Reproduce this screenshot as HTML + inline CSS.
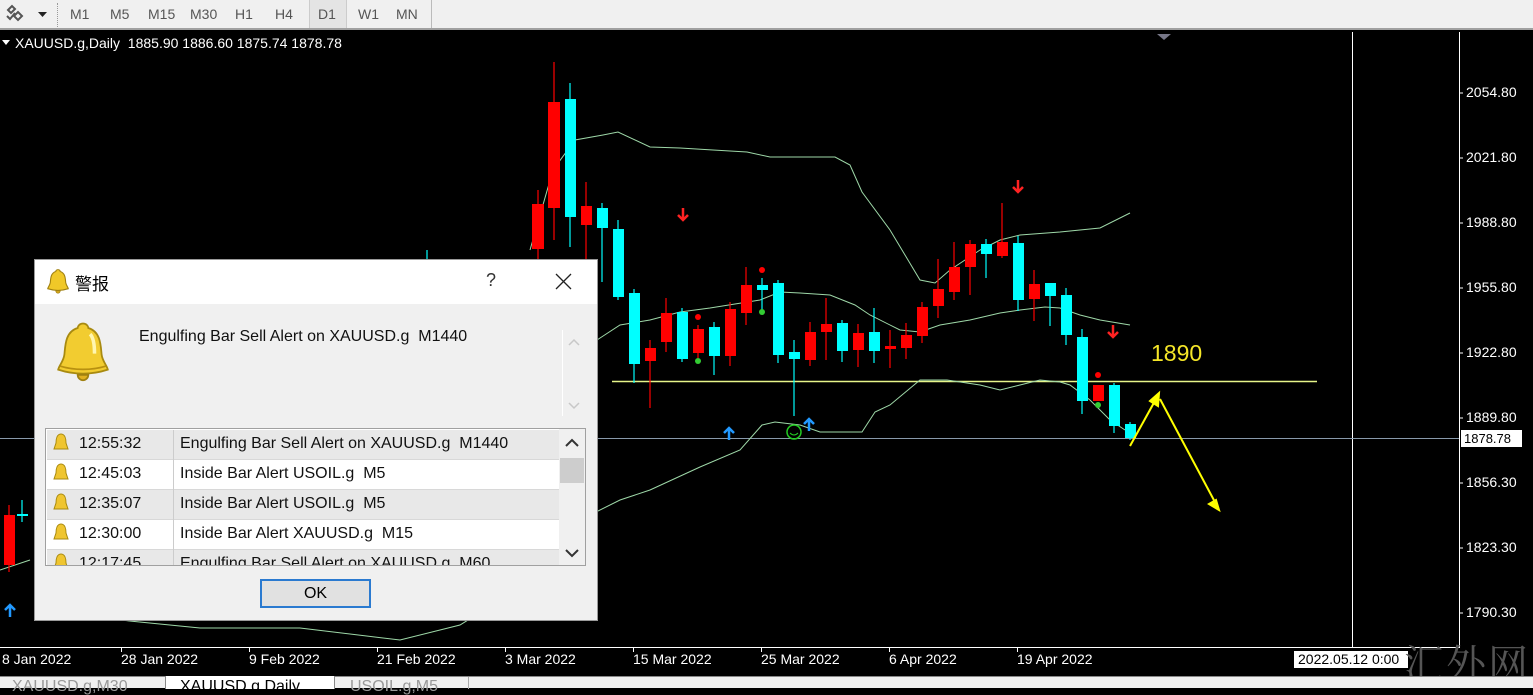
<!DOCTYPE html>
<html><head><meta charset="utf-8"><style>
*{margin:0;padding:0;box-sizing:border-box}
body{width:1533px;height:688px;overflow:hidden;background:#000;font-family:"Liberation Sans","Noto Sans CJK SC",sans-serif;position:relative}
.tb{position:absolute;left:0;top:0;width:1533px;height:30px;background:#f0f0f0;border-bottom:2px solid #a0a0a0}
.tb span{position:absolute;top:6px;font-size:14px;color:#555}
.tabs{position:absolute;left:0;top:676px;width:1533px;height:12px;background:#f0f0f0;border-top:1px solid #888}
.tabs span{position:absolute;top:2px;font-size:16px;color:#999;line-height:16px}
.ax{position:absolute;left:1466px;font-size:14px;color:#fff}
.tl{position:absolute;top:651px;font-size:14px;color:#fff}
.dlg{position:absolute;left:34px;top:259px;width:564px;height:362px;background:#f0f0f0;border:1px solid #9a9a9a}
.ttl{position:absolute;left:0;top:0;width:562px;height:44px;background:#fff}
.row{position:absolute;left:1px;width:512px;height:30px;font-size:16px;color:#111;border-bottom:1px solid #d8d8d8}
.row .t{position:absolute;left:32px;top:5px}
.row .m{position:absolute;left:133px;top:5px}
.row .sep{position:absolute;left:126px;top:0;width:1px;height:30px;background:#ccc}
</style></head><body>
<div class="tb">
<svg style="position:absolute;left:4px;top:4px" width="48" height="22"><path d="M4 6l4-4 3 3-4 4zM10 12l4-4 4 4-4 4zM3 12l3 3 5-6" stroke="#555" stroke-width="2" fill="none"/><path d="M34 8h9l-4.5 5z" fill="#222"/></svg>
<div style="position:absolute;left:57px;top:3px;width:2px;height:24px;border-left:1px dotted #999"></div>
<span style="left:70px">M1</span><span style="left:110px">M5</span><span style="left:148px">M15</span><span style="left:190px">M30</span><span style="left:235px">H1</span><span style="left:275px">H4</span>
<div style="position:absolute;left:309px;top:0;width:38px;height:28px;background:#e4e4e4;border-left:1px solid #ccc;border-right:1px solid #ccc"></div>
<span style="left:318px">D1</span><span style="left:358px">W1</span><span style="left:396px">MN</span>
<div style="position:absolute;left:431px;top:0;width:1px;height:28px;background:#bbb"></div>
</div>

<svg style="position:absolute;left:0;top:30px" width="1533" height="646" viewBox="0 30 1533 646">
<line x1="0" y1="647.5" x2="1459" y2="647.5" stroke="#fff"/>
<line x1="1459.5" y1="32" x2="1459.5" y2="648" stroke="#fff"/>
<line x1="1352.5" y1="32" x2="1352.5" y2="648" stroke="#fff"/>
<path d="M1157 34h14l-7 6z" fill="#778"/>
<g stroke="#fff"><line x1="121.5" y1="647" x2="121.5" y2="652"/><line x1="249.5" y1="647" x2="249.5" y2="652"/><line x1="377.5" y1="647" x2="377.5" y2="652"/><line x1="505.5" y1="647" x2="505.5" y2="652"/><line x1="633.5" y1="647" x2="633.5" y2="652"/><line x1="761.5" y1="647" x2="761.5" y2="652"/><line x1="889.5" y1="647" x2="889.5" y2="652"/><line x1="1017.5" y1="647" x2="1017.5" y2="652"/>
<line x1="1459" y1="93" x2="1463" y2="93"/><line x1="1459" y1="158" x2="1463" y2="158"/><line x1="1459" y1="223" x2="1463" y2="223"/><line x1="1459" y1="288" x2="1463" y2="288"/><line x1="1459" y1="353" x2="1463" y2="353"/><line x1="1459" y1="418" x2="1463" y2="418"/><line x1="1459" y1="483" x2="1463" y2="483"/><line x1="1459" y1="548" x2="1463" y2="548"/><line x1="1459" y1="613" x2="1463" y2="613"/></g>
<line x1="0" y1="438.5" x2="1459" y2="438.5" stroke="#8899aa"/>
<line x1="612" y1="381.5" x2="1317" y2="381.5" stroke="#e6f58a" stroke-width="1.5"/>
<g fill="none" stroke="#9ed8a8" stroke-width="1">
<polyline points="530,250 553,170 575,140 603,135 618,132 650,147 680,148 713,150 747,152 770,157 835,157 850,165 862,192 890,230 920,280 935,283 950,270 980,250 1000,240 1020,235 1060,232 1100,228 1130,213"/>
<polyline points="560,360 597,340 620,325 650,320 680,312 710,308 760,300 780,292 800,293 830,295 855,305 870,315 900,330 920,332 940,325 970,320 1000,313 1020,310 1045,307 1060,308 1080,315 1100,320 1130,325"/>
<polyline points="120,620 200,628 300,628 400,640 460,625 500,600 540,560 580,520 620,500 650,490 700,467 740,450 762,425 775,422 800,425 820,432 862,432 875,412 890,405 920,380 947,380 980,385 1000,390 1020,385 1040,380 1060,382 1070,385 1090,400 1110,420 1125,430"/>
<polyline points="0,570 30,560"/>
</g>
<g stroke-width="1.2">
<line x1="9" y1="505" x2="9" y2="572" stroke="#f00"/><rect x="4" y="515" width="11" height="50" fill="#f00"/>
<line x1="22" y1="500" x2="22" y2="522" stroke="#0ff"/><rect x="17" y="514" width="11" height="2" fill="#0ff"/>
<line x1="427" y1="250" x2="427" y2="262" stroke="#0ff"/>
<line x1="538" y1="190" x2="538" y2="262" stroke="#f00"/><rect x="532" y="204" width="12" height="45" fill="#f00"/>
<line x1="554" y1="62" x2="554" y2="240" stroke="#f00"/><rect x="548" y="102" width="12" height="106" fill="#f00"/>
<line x1="570" y1="83" x2="570" y2="247" stroke="#0ff"/><rect x="565" y="99" width="11" height="118" fill="#0ff"/>
<line x1="586" y1="182" x2="586" y2="262" stroke="#f00"/><rect x="581" y="206" width="11" height="19" fill="#f00"/>
<line x1="602" y1="203" x2="602" y2="282" stroke="#0ff"/><rect x="597" y="208" width="11" height="20" fill="#0ff"/>
<line x1="618" y1="220" x2="618" y2="300" stroke="#0ff"/><rect x="613" y="229" width="11" height="68" fill="#0ff"/>
<line x1="634" y1="289" x2="634" y2="383" stroke="#0ff"/><rect x="629" y="293" width="11" height="71" fill="#0ff"/>
<line x1="650" y1="340" x2="650" y2="408" stroke="#f00"/><rect x="645" y="348" width="11" height="13" fill="#f00"/>
<line x1="666" y1="298" x2="666" y2="352" stroke="#f00"/><rect x="661" y="313" width="11" height="29" fill="#f00"/>
<line x1="682" y1="308" x2="682" y2="362" stroke="#0ff"/><rect x="677" y="312" width="11" height="47" fill="#0ff"/>
<line x1="698" y1="325" x2="698" y2="358" stroke="#f00"/><rect x="693" y="329" width="11" height="24" fill="#f00"/>
<line x1="714" y1="322" x2="714" y2="375" stroke="#0ff"/><rect x="709" y="327" width="11" height="29" fill="#0ff"/>
<line x1="730" y1="302" x2="730" y2="366" stroke="#f00"/><rect x="725" y="309" width="11" height="47" fill="#f00"/>
<line x1="746" y1="267" x2="746" y2="325" stroke="#f00"/><rect x="741" y="285" width="11" height="28" fill="#f00"/>
<line x1="762" y1="278" x2="762" y2="310" stroke="#0ff"/><rect x="757" y="285" width="11" height="5" fill="#0ff"/>
<line x1="778" y1="280" x2="778" y2="363" stroke="#0ff"/><rect x="773" y="283" width="11" height="72" fill="#0ff"/>
<line x1="794" y1="340" x2="794" y2="416" stroke="#0ff"/><rect x="789" y="352" width="11" height="7" fill="#0ff"/>
<line x1="810" y1="322" x2="810" y2="366" stroke="#f00"/><rect x="805" y="332" width="11" height="28" fill="#f00"/>
<line x1="826" y1="298" x2="826" y2="360" stroke="#f00"/><rect x="821" y="324" width="11" height="8" fill="#f00"/>
<line x1="842" y1="320" x2="842" y2="362" stroke="#0ff"/><rect x="837" y="323" width="11" height="28" fill="#0ff"/>
<line x1="858" y1="324" x2="858" y2="367" stroke="#f00"/><rect x="853" y="333" width="11" height="17" fill="#f00"/>
<line x1="874" y1="308" x2="874" y2="363" stroke="#0ff"/><rect x="869" y="332" width="11" height="19" fill="#0ff"/>
<line x1="890" y1="330" x2="890" y2="368" stroke="#f00"/><rect x="885" y="346" width="11" height="3" fill="#f00"/>
<line x1="906" y1="323" x2="906" y2="359" stroke="#f00"/><rect x="901" y="335" width="11" height="13" fill="#f00"/>
<line x1="922" y1="302" x2="922" y2="343" stroke="#f00"/><rect x="917" y="307" width="11" height="29" fill="#f00"/>
<line x1="938" y1="259" x2="938" y2="318" stroke="#f00"/><rect x="933" y="289" width="11" height="17" fill="#f00"/>
<line x1="954" y1="242" x2="954" y2="300" stroke="#f00"/><rect x="949" y="267" width="11" height="25" fill="#f00"/>
<line x1="970" y1="240" x2="970" y2="295" stroke="#f00"/><rect x="965" y="244" width="11" height="23" fill="#f00"/>
<line x1="986" y1="239" x2="986" y2="278" stroke="#0ff"/><rect x="981" y="244" width="11" height="10" fill="#0ff"/>
<line x1="1002" y1="203" x2="1002" y2="258" stroke="#f00"/><rect x="997" y="242" width="11" height="14" fill="#f00"/>
<line x1="1018" y1="236" x2="1018" y2="311" stroke="#0ff"/><rect x="1013" y="243" width="11" height="57" fill="#0ff"/>
<line x1="1034" y1="270" x2="1034" y2="321" stroke="#f00"/><rect x="1029" y="284" width="11" height="15" fill="#f00"/>
<line x1="1050" y1="283" x2="1050" y2="326" stroke="#0ff"/><rect x="1045" y="283" width="11" height="13" fill="#0ff"/>
<line x1="1066" y1="288" x2="1066" y2="345" stroke="#0ff"/><rect x="1061" y="295" width="11" height="40" fill="#0ff"/>
<line x1="1082" y1="329" x2="1082" y2="414" stroke="#0ff"/><rect x="1077" y="337" width="11" height="64" fill="#0ff"/>
<rect x="1093" y="385" width="11" height="16" fill="#f00"/>
<line x1="1114" y1="383" x2="1114" y2="433" stroke="#0ff"/><rect x="1109" y="385" width="11" height="41" fill="#0ff"/>
<line x1="1130" y1="422" x2="1130" y2="440" stroke="#0ff"/><rect x="1125" y="424" width="11" height="14" fill="#0ff"/>
</g>
<g fill="#f00"><circle cx="762" cy="270" r="3"/><circle cx="698" cy="317" r="3"/><circle cx="1098" cy="375" r="3"/></g>
<g fill="#3c3"><circle cx="698" cy="361" r="3"/><circle cx="762" cy="312" r="3"/><circle cx="1098" cy="405" r="3"/></g>
<g stroke="#f22" stroke-width="2.5" fill="none"><path d="M683 208v12M678 215l5 5 5-5"/><path d="M1018 180v12M1013 187l5 5 5-5"/><path d="M1113 325v12M1108 332l5 5 5-5"/></g>
<g stroke="#29f" stroke-width="2.5" fill="none"><path d="M729 440v-12M724 433l5-5 5 5"/><path d="M809 431v-12M804 424l5-5 5 5"/><path d="M10 617v-12M5 610l5-5 5 5"/></g>
<circle cx="794" cy="432" r="7" stroke="#2c2" stroke-width="1.5" fill="none"/><path d="M790 433q4 4 8 0" stroke="#2c2" fill="none"/>
<g stroke="#ff0" stroke-width="2" fill="#ff0"><line x1="1130" y1="446" x2="1156" y2="399"/><path d="M1159 393l-1 13-8-5z"/><line x1="1160" y1="399" x2="1216" y2="504"/><path d="M1219 510l-10-6 7-4z"/></g>
<text x="1151" y="361" font-size="23" fill="#f5e628" font-family="Liberation Sans">1890</text>
</svg>

<div style="position:absolute;left:2px;top:40px;width:0;height:0;border-left:4px solid transparent;border-right:4px solid transparent;border-top:5px solid #fff"></div>
<div style="position:absolute;left:15px;top:35px;font-size:14px;color:#fff;white-space:pre">XAUUSD.g,Daily  1885.90 1886.60 1875.74 1878.78</div>
<div class="ax" style="top:84px">2054.80</div><div class="ax" style="top:149px">2021.80</div><div class="ax" style="top:214px">1988.80</div><div class="ax" style="top:279px">1955.80</div><div class="ax" style="top:344px">1922.80</div><div class="ax" style="top:409px">1889.80</div><div class="ax" style="top:474px">1856.30</div><div class="ax" style="top:539px">1823.30</div><div class="ax" style="top:604px">1790.30</div>
<div style="position:absolute;left:1461px;top:430px;width:61px;height:17px;background:#fff;color:#000;font-size:13px;padding-left:3px;line-height:17px">1878.78</div>
<div class="tl" style="left:2px">8 Jan 2022</div><div class="tl" style="left:121px">28 Jan 2022</div><div class="tl" style="left:249px">9 Feb 2022</div><div class="tl" style="left:377px">21 Feb 2022</div><div class="tl" style="left:505px">3 Mar 2022</div><div class="tl" style="left:633px">15 Mar 2022</div><div class="tl" style="left:761px">25 Mar 2022</div><div class="tl" style="left:889px">6 Apr 2022</div><div class="tl" style="left:1017px">19 Apr 2022</div>
<div style="position:absolute;left:1294px;top:651px;width:114px;height:17px;background:#fff;color:#000;font-size:14px;line-height:17px;padding-left:4px">2022.05.12 0:00</div>
<div style="position:absolute;left:1404px;top:633px;font-size:40px;color:#555;font-family:'Noto Serif CJK SC',serif;letter-spacing:2px">汇外网</div>

<div class="tabs">
<span style="left:12px">XAUUSD.g,M30</span>
<div style="position:absolute;left:165px;top:-1px;width:170px;height:13px;background:#fff;border-left:1px solid #888;border-right:1px solid #888"></div>
<span style="left:180px;color:#000">XAUUSD.g,Daily</span>
<div style="position:absolute;left:468px;top:0;width:1px;height:12px;background:#aaa"></div>
<span style="left:350px">USOIL.g,M5</span>
</div>

<div class="dlg">
<div class="ttl">
<svg style="position:absolute;left:12px;top:8px" width="22" height="26" viewBox="0 0 60 70"><path d="M30 4c-4 0-6 3-6 5-14 4-14 20-15 30-1 8-6 12-7 17 18 6 38 6 56 0-1-5-6-9-7-17-1-10-1-26-15-30 0-2-2-5-6-5z" fill="#f0c828" stroke="#a08010" stroke-width="3"/><path d="M24 62a6 6 0 0 0 12 0z" fill="#e0b020" stroke="#a08010" stroke-width="2"/></svg>
<div style="position:absolute;left:40px;top:10px;font-size:17px;color:#000">警报</div>
<div style="position:absolute;left:451px;top:10px;font-size:18px;color:#333">?</div>
<svg style="position:absolute;left:520px;top:13px" width="17" height="17"><path d="M1 1l15 15M16 1L1 16" stroke="#222" stroke-width="1.3"/></svg>
</div>
<svg style="position:absolute;left:17px;top:60px" width="62" height="62" viewBox="0 0 60 70"><path d="M30 4c-4 0-6 3-6 5-14 4-14 20-15 30-1 8-6 12-7 17 18 6 38 6 56 0-1-5-6-9-7-17-1-10-1-26-15-30 0-2-2-5-6-5z" fill="#f2cc30" stroke="#a88a10" stroke-width="2"/><path d="M4 52c16 5 36 5 52 0" stroke="#b89010" fill="none" stroke-width="2"/><path d="M24 62a6 6 0 0 0 12 0z" fill="#e0b020" stroke="#a08010" stroke-width="2"/><path d="M38 16c4 4 5 14 5 22" stroke="#fff6b0" stroke-width="4" fill="none"/></svg>
<div style="position:absolute;left:104px;top:68px;font-size:16px;color:#111">Engulfing Bar Sell Alert on XAUUSD.g&nbsp; M1440</div>
<div style="position:absolute;left:527px;top:70px;width:1px;height:86px;background:#fff"></div>
<svg style="position:absolute;left:532px;top:76px" width="14" height="80"><path d="M2 9l5-5 5 5M2 67l5 5 5-5" stroke="#c8c8c8" stroke-width="1.5" fill="none"/></svg>
<div style="position:absolute;left:10px;top:168px;width:541px;height:138px;border:1px solid #a0a0a0;background:#fff;overflow:hidden">
<div class="row" style="top:1px;background:#e8e8e8"><span class="t">12:55:32</span><span class="sep"></span><span class="m">Engulfing Bar Sell Alert on XAUUSD.g&nbsp; M1440</span></div>
<div class="row" style="top:31px;background:#fff"><span class="t">12:45:03</span><span class="sep"></span><span class="m">Inside Bar Alert USOIL.g&nbsp; M5</span></div>
<div class="row" style="top:61px;background:#e8e8e8"><span class="t">12:35:07</span><span class="sep"></span><span class="m">Inside Bar Alert USOIL.g&nbsp; M5</span></div>
<div class="row" style="top:91px;background:#fff"><span class="t">12:30:00</span><span class="sep"></span><span class="m">Inside Bar Alert XAUUSD.g&nbsp; M15</span></div>
<div class="row" style="top:121px;background:#e8e8e8"><span class="t">12:17:45</span><span class="sep"></span><span class="m">Engulfing Bar Sell Alert on XAUUSD.g&nbsp; M60</span></div>
<svg style="position:absolute;left:5px;top:0" width="20" height="150"><g fill="#efc530" stroke="#a88a10" stroke-width="1"><path d="M10 5c-4 0-5 5-5 9l-2 6h14l-2-6c0-4-1-9-5-9z"/><path d="M10 35c-4 0-5 5-5 9l-2 6h14l-2-6c0-4-1-9-5-9z"/><path d="M10 65c-4 0-5 5-5 9l-2 6h14l-2-6c0-4-1-9-5-9z"/><path d="M10 95c-4 0-5 5-5 9l-2 6h14l-2-6c0-4-1-9-5-9z"/><path d="M10 125c-4 0-5 5-5 9l-2 6h14l-2-6c0-4-1-9-5-9z"/></g></svg>
<div style="position:absolute;left:513px;top:0;width:26px;height:136px;background:#f0f0f0"></div>
<div style="position:absolute;left:514px;top:29px;width:24px;height:25px;background:#cdcdcd"></div>
<svg style="position:absolute;left:518px;top:8px" width="16" height="124"><path d="M2 9l6-6 6 6M2 113l6 6 6-6" stroke="#333" stroke-width="2" fill="none"/></svg>
</div>
<div style="position:absolute;left:225px;top:319px;width:111px;height:29px;border:2px solid #2a7ad0;background:#e1e1e1;text-align:center;font-size:16px;line-height:25px;color:#000">OK</div>
</div>
</body></html>
